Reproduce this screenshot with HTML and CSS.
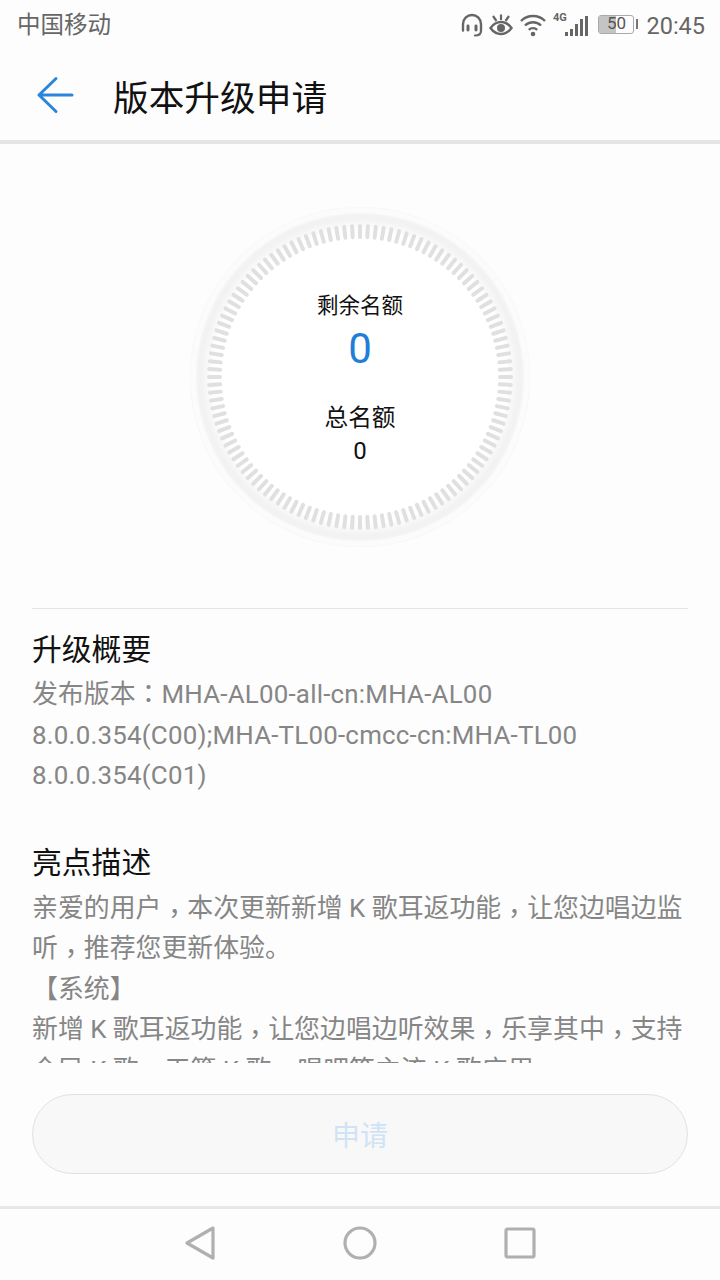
FILE: index.html
```html
<!DOCTYPE html>
<html lang="zh">
<head>
<meta charset="utf-8">
<title>版本升级申请</title>
<link rel="stylesheet" href="styles.css">
</head>
<body>
<div class="app">
  <div class="status">
    <span class="carrier">中国移动</span>
    <div class="status-right">
      <svg class="ic" width="22" height="24" viewBox="0 0 22 24" fill="none" stroke="#666" stroke-width="2.400" stroke-linecap="round"><path d="M2 17.500V11a9 9 0 0 1 18 0v6.500"/><rect x="5.500" y="11.500" width="3" height="7" rx="1.400" fill="#666" stroke="none"/><rect x="13.500" y="11.500" width="3" height="7" rx="1.400" fill="#666" stroke="none"/><path d="M20 18c0 3-2.500 4.500-6 4.500" stroke-width="2.200"/></svg>
      <svg class="ic eye" width="24" height="24" viewBox="0 0 24 24" fill="none" stroke="#666" stroke-width="2.400"><path d="M1.500 15c3-4.200 6.500-6 10.500-6s7.500 1.800 10.500 6c-3 4.200-6.500 6-10.500 6s-7.500-1.800-10.500-6z"/><circle cx="12" cy="15" r="4" fill="#666" stroke="none"/><path d="M4 3l3.500 5M12 1.500V7M20 3l-3.500 5" stroke-width="2.200"/></svg>
      <svg class="ic wifi" width="26" height="24" viewBox="0 0 26 24" fill="none" stroke="#666" stroke-width="2.400"><path d="M1 8a17 17 0 0 1 24 0M5 12.500a11.500 11.500 0 0 1 16 0M8.800 16.800a6 6 0 0 1 8.400 0"/><circle cx="13" cy="21" r="2.300" fill="#666" stroke="none"/></svg>
      <div class="signal">
        <span class="net">4G</span>
        <svg width="23" height="24" viewBox="0 0 23 24" fill="#666"><rect x="0" y="19" width="3" height="4"/><rect x="5" y="16" width="3" height="7"/><rect x="10" y="11" width="3" height="12"/><rect x="15" y="6" width="3" height="17"/><rect x="20" y="3" width="3" height="20"/></svg>
      </div>
      <div class="battery"><div class="batt-body"><div class="batt-fill"></div><span class="batt-num">50</span></div><div class="batt-tip"></div></div>
      <span class="clock">20:45</span>
    </div>
  </div>

  <header class="bar">
    <svg class="back" width="40" height="38" viewBox="0 0 40 38" fill="none" stroke="#2b85da" stroke-width="3" stroke-linecap="round" stroke-linejoin="round"><path d="M20 2.500L3 19l17 16.500M3 19h33"/></svg>
    <h1 class="title">版本升级申请</h1>
  </header>

  <main class="content">
    <section class="gauge">
      <svg class="dial" width="340" height="340" viewBox="0 0 340 340" fill="none">
        <defs>
          <radialGradient id="halo" gradientUnits="userSpaceOnUse" cx="170" cy="170" r="171">
            <stop offset="0.860" stop-color="#ffffff"/>
            <stop offset="0.895" stop-color="#f8f8f8"/>
            <stop offset="0.930" stop-color="#f2f2f2"/>
            <stop offset="0.950" stop-color="#f3f3f3"/>
            <stop offset="0.962" stop-color="#fbfbfb"/>
            <stop offset="0.985" stop-color="#fcfcfc"/>
            <stop offset="0.992" stop-color="#f8f8f8"/>
            <stop offset="1" stop-color="#fdfdfd"/>
          </radialGradient>
          <line id="t" x1="170" y1="19" x2="170" y2="30" stroke="#e0e0e0" stroke-width="4" stroke-linecap="round"/>
          <g id="a"><use href="#t"/><use href="#t" transform="rotate(3 170 170)"/></g>
          <g id="b"><use href="#a"/><use href="#a" transform="rotate(6 170 170)"/><use href="#a" transform="rotate(12 170 170)"/><use href="#a" transform="rotate(18 170 170)"/><use href="#a" transform="rotate(24 170 170)"/></g>
          <g id="c"><use href="#b"/><use href="#b" transform="rotate(30 170 170)"/><use href="#b" transform="rotate(60 170 170)"/><use href="#b" transform="rotate(90 170 170)"/></g>
        </defs>
        <circle cx="170" cy="170" r="171" fill="url(#halo)"/>
        <use href="#c"/>
        <use href="#c" transform="rotate(120 170 170)"/>
        <use href="#c" transform="rotate(240 170 170)"/>
      </svg>
      <div class="gauge-text">
        <div class="g-label">剩余名额</div>
        <div class="g-big">0</div>
        <div class="g-label2">总名额</div>
        <div class="g-small">0</div>
      </div>
    </section>

    <div class="scroller">
      <h2 class="sec first">升级概要</h2>
      <p class="txt txt-a">发布版本<span class="cm" lang="zh-Hant">：</span><span class="lat">MHA-AL00-all-cn:MHA-AL00<br>8.0.0.354(C00);MHA-TL00-cmcc-cn:MHA-TL00<br>8.0.0.354(C01)</span></p>
      <h2 class="sec second">亮点描述</h2>
      <p class="txt">亲爱的用户<span class="cm low" lang="zh-Hant">，</span>本次更新新增 K 歌耳返功能<span class="cm low" lang="zh-Hant">，</span>让您边唱边监<br>听<span class="cm low" lang="zh-Hant">，</span>推荐您更新体验。<br>【系统】<br>新增 K 歌耳返功能<span class="cm low" lang="zh-Hant">，</span>让您边唱边听效果<span class="cm low" lang="zh-Hant">，</span>乐享其中<span class="cm low" lang="zh-Hant">，</span>支持<br>全民 K 歌、天籁 K 歌、唱吧等主流 K 歌应用。</p>
    </div>

    <div class="action"><button class="apply" type="button">申请</button></div>
  </main>

  <nav class="navbar">
    <svg width="32" height="36" viewBox="0 0 32 36" fill="none" stroke="#b0b0b0" stroke-width="3.200" stroke-linejoin="round"><path d="M29 3L3 18l26 15z"/></svg>
    <svg width="34" height="34" viewBox="0 0 34 34" fill="none" stroke="#b0b0b0" stroke-width="3.200"><circle cx="17" cy="17" r="15"/></svg>
    <svg width="32" height="32" viewBox="0 0 32 32" fill="none" stroke="#b0b0b0" stroke-width="3.200" stroke-linejoin="round"><rect x="2" y="2" width="28" height="28" rx="1.500"/></svg>
  </nav>
</div>
</body>
</html>
```
FILE: styles.css
```css
* { box-sizing: border-box; }
html, body { margin: 0; padding: 0; }
body { background: #fdfdfd; font-family: "Noto Sans CJK SC", "Roboto", sans-serif; }
.app { width: 720px; height: 1280px; display: flex; flex-direction: column; overflow: hidden; background: #fdfdfd; }
.status { height: 50px; flex: none; display: flex; align-items: center; justify-content: space-between; padding: 0 15px 0 17px; color: #666; }
.carrier { font-size: 23.500px; line-height: 30px; padding-bottom: 4px; }
.status-right { display: flex; align-items: center; }
.ic { display: block; }
.eye { margin-left: 6px; }
.wifi { margin-left: 7px; }
.signal { position: relative; width: 35px; height: 24px; margin-left: 7px; }
.signal svg { position: absolute; right: 0; top: 0; }
.net { position: absolute; left: 0; top: -1px; font: bold 11px/12px "Roboto", sans-serif; color: #666; }
.battery { display: flex; align-items: center; margin-left: 10px; margin-right: 8px; padding-bottom: 2px; }
.batt-body { position: relative; width: 36px; height: 19px; border: 1.500px solid #aaa; border-radius: 3px; }
.batt-fill { width: 50%; height: 100%; background: #c4c4c4; }
.batt-num { position: absolute; left: 8px; top: -0.500px; font: 17px/17px "Roboto", sans-serif; color: #555; }
.batt-tip { width: 2.500px; height: 10px; background: #777; margin-left: 2px; }
.clock { font: 23.500px/26px "Roboto", sans-serif; color: #666; margin-top: 2px; }

.bar { height: 94px; flex: none; display: flex; align-items: center; padding: 0 0 0 36px; border-bottom: 4px solid #e4e4e4; }
.back { display: block; flex: none; }
.title { margin: 2px 0 0 37px; font-size: 35.700px; font-weight: 400; color: #111; line-height: 48px; }

.content { flex: 1; min-height: 0; display: flex; flex-direction: column; }
.gauge { position: relative; height: 465px; flex: none; border-bottom: 1px solid #e4e4e4; margin: 0 32px; }
.dial { position: absolute; left: 158px; top: 63px; }
.gauge-text { position: absolute; left: 0; right: 0; top: 145px; text-align: center; color: #111; }
.g-label { font-size: 21.500px; line-height: 30px; }
.g-big { font: 42px/48px "Roboto", sans-serif; color: #1f7fd8; margin-top: 6px; }
.g-label2 { font-size: 23.700px; line-height: 30px; margin-top: 28px; }
.g-small { font: 24px/30px "Roboto", sans-serif; margin-top: 5px; }

.scroller { height: 454px; flex: none; overflow: hidden; padding: 0 32px; }
.sec { margin: 0; font-size: 29.800px; font-weight: 400; line-height: 40px; color: #111; }
.first { margin-top: 18px; }
.second { margin-top: 44px; }
.txt { margin: 8px 0 0; font-size: 25.900px; line-height: 40.500px; color: #868686; white-space: nowrap; font-family: "Roboto", "Noto Sans CJK SC", sans-serif; }
.txt-a { margin-top: 7px; }
.cm { font-family: "Noto Sans CJK TC", sans-serif; line-height: 0; }
.low { vertical-align: -6px; }
.lat { letter-spacing: 0.220px; }

.action { flex: 1; padding: 31px 32px 0; }
.apply { display: block; width: 100%; height: 80px; border: 1px solid #e2e2e2; border-radius: 40px; background: #f8f8f8; color: #cfe3f5; font-family: inherit; font-size: 28px; padding: 0; }

.navbar { height: 74px; flex: none; border-top: 3px solid #e8e8e8; display: flex; align-items: center; justify-content: center; gap: 127px; padding-bottom: 3px; }
```
